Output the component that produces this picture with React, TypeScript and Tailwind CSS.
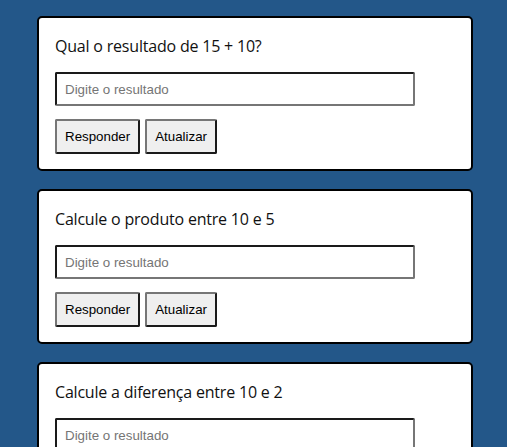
import React from 'react';

interface Pergunta {
  id: number;
  texto: string;
}

const perguntas: Pergunta[] = [
  { id: 1, texto: 'Qual o resultado de 15 + 10?' },
  { id: 2, texto: 'Calcule o produto entre 10 e 5' },
  { id: 3, texto: 'Calcule a diferença entre 10 e 2' },
];

const btn =
  "h-[35px] rounded-[2px] border-2 border-t-[#767676] border-l-[#767676] border-r-[#1a1a1a] border-b-[#1a1a1a] bg-[#efefef] px-2 font-['Liberation_Sans',sans-serif] text-[13.333px] text-black";

const App: React.FC = () => {
  return (
    <div className="min-h-screen bg-[#235789] pt-4 pl-[37px] pb-4">
      <div className="flex w-[436px] flex-col gap-[18px]">
        {perguntas.map((p) => (
          <div key={p.id} className="rounded-[5px] border-2 border-black bg-white px-4 pt-4 pb-[15px]">
            <h2 className="mb-[14px] font-['Open_Sans',sans-serif] text-base leading-6 tracking-[-0.2px] text-[#111]">
              {p.texto}
            </h2>
            <input
              type="text"
              placeholder="Digite o resultado"
              className="block h-[34px] w-[360px] rounded-[2px] border-2 border-t-[#1a1a1a] border-l-[#1a1a1a] border-r-[#767676] border-b-[#767676] px-[8px] font-['Liberation_Sans',sans-serif] text-[13.333px] placeholder:text-[#757575] focus:outline-none"
            />
            <div className="mt-[13px] flex gap-[5px]">
              <button className={btn}>Responder</button>
              <button className={btn}>Atualizar</button>
            </div>
          </div>
        ))}
      </div>
    </div>
  );
};

export default App;
